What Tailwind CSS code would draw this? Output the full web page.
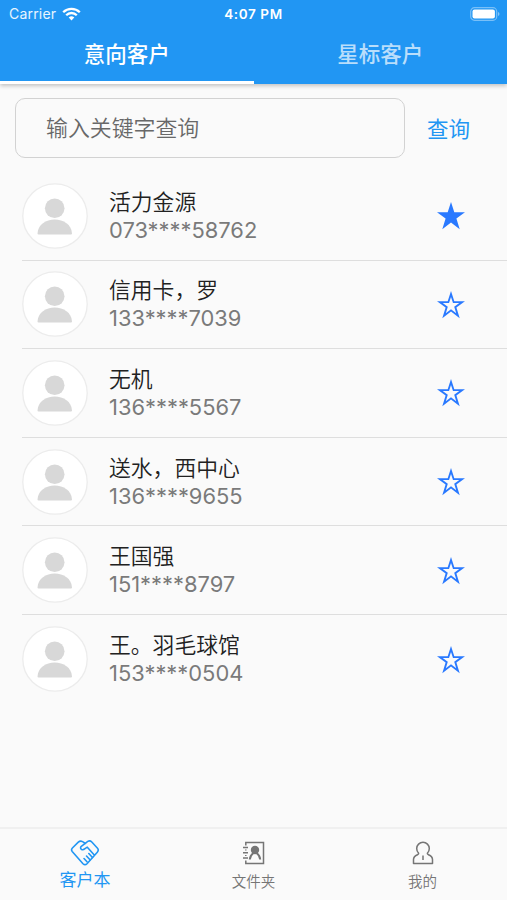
<!DOCTYPE html>
<html lang="zh-CN">
<head>
    <meta charset="UTF-8">
    <meta name="viewport" content="width=device-width, initial-scale=1.0">
    <title>客户本</title>
    <script src="https://cdn.jsdelivr.net/npm/@tailwindcss/browser@4"></script>
</head>
<body class="bg-[#fafafa] font-['Inter','Noto_Sans_CJK_SC',sans-serif] text-[#212121] flex flex-col h-[900px] overflow-hidden">

    <!-- Header -->
    <header class="bg-[#2196f3] text-white h-[84px] shrink-0 flex flex-col shadow-[0_2px_4px_rgba(0,0,0,0.22)]">
        <div class="h-[27px] grid grid-cols-3 items-center pl-[9px] pr-[7px]">
            <div class="flex items-center gap-1.5 text-[14px] text-white/90">
                <span class="w-[47px] whitespace-nowrap tracking-[0.2px]">Carrier</span>
                <svg class="w-[19px] h-[14px]" viewBox="0 0 19 14" fill="none" stroke="white" stroke-width="2.3">
                    <path d="M1.2 5.2a11.8 11.8 0 0 1 16.6 0"/>
                    <path d="M4.2 8.2a7.5 7.5 0 0 1 10.6 0"/>
                    <path d="M9.5 13.4 6.7 10.6a4 4 0 0 1 5.6 0z" fill="white" stroke="none"/>
                </svg>
            </div>
            <span class="text-[13.5px] font-semibold text-center whitespace-nowrap tracking-[0.6px] pt-px pr-0.5">4:07 PM</span>
            <svg class="w-[30px] h-[14px] justify-self-end" viewBox="0 0 30 14">
                <rect x="0.7" y="0.7" width="26" height="12.6" rx="3.8" fill="none" stroke="white" stroke-opacity="0.4" stroke-width="1.2"/>
                <rect x="2.5" y="2.5" width="22.4" height="9" rx="2" fill="white"/>
                <path d="M28 5v4q1.5-.5 1.5-2t-1.5-2" fill="white" fill-opacity="0.45"/>
            </svg>
        </div>
        <nav class="grow grid grid-cols-2 text-[21.5px] font-medium text-center leading-[54px]">
            <a class="border-b-[3px] border-white">意向客户</a>
            <a class="text-white/70">星标客户</a>
        </nav>
    </header>

    <!-- Search -->
    <div class="flex items-center pl-[15px] pt-[14px] shrink-0">
        <div class="w-[390px] h-[60px] border-[1.5px] border-[#d2d2d2] rounded-[10px] flex items-center pl-[30px] text-[21.9px] font-[350] text-[#686868]">输入关键字查询</div>
        <button class="ml-[22px] pt-0.5 text-[21.5px] text-[#2196f3]">查询</button>
    </div>

    <!-- Customers -->
    <ul id="list" class="grow mt-[14px] pl-[22px]"></ul>

    <!-- Bottom bar -->
    <footer class="h-[73px] shrink-0 border-t-2 border-[#f0f0f0] grid grid-cols-3 text-[#757575] text-[14.5px]">
        <div class="flex flex-col items-center pt-[10px] pl-px text-[#2196f3] text-[17px]">
            <svg class="w-[30px] h-[28px]" viewBox="0 0 30 28" fill="none" stroke="currentColor" stroke-width="1.6" stroke-linejoin="round" stroke-linecap="round">
                <path d="M15.500 4.500 12.500 2.600Q10.300 1.300 8.300 3.200L2.400 9Q.8 10.700 2.200 12.500L13 24.700Q15 26.700 17 24.700L27.300 13.200Q29.200 11 27.300 9L21.800 3Q20 1.200 17.800 2.400L11.300 7.300Q9.800 9 11.400 10.300Q13 11.400 15 9.700L17.300 8.200L24.500 16.300"/>
                <path d="M14 19.500l3 3.300M16.500 17l3.500 3.800M18.800 14.500l3.700 4"/>
            </svg>
            <span class="mt-px leading-6">客户本</span>
        </div>
        <div class="flex flex-col items-center pt-[11px]">
            <svg class="w-[24px] h-[26px]" viewBox="0 0 24 26" fill="none" stroke="currentColor" stroke-width="1.5">
                <path d="M3.800 5.500V2.500h17.700v21H3.800v-3M3.800 9.500v1M3.800 15v1"/>
                <path d="M1 7.500h5M1 12.800h5M1 18.100h5"/>
                <circle cx="13" cy="10" r="4.200" fill="currentColor" stroke="none"/>
                <path d="M7.800 19.500Q8 15.500 11.500 13M18.200 19.500Q18 15.500 14.500 13" stroke-width="2"/>
            </svg>
            <span class="mt-1 leading-6 font-[350]">文件夹</span>
        </div>
        <div class="flex flex-col items-center pt-[11px]">
            <svg class="w-[24px] h-[26px]" viewBox="0 0 24 26" fill="none" stroke="currentColor" stroke-width="1.5" stroke-linejoin="round">
                <path d="M7.500 13A6.300 6.300 0 1 1 16.500 13Q16 14 17.500 14.700Q21.500 16.500 21.500 19.500V23.500H2.500V19.500Q2.500 16.500 6.500 14.700Q8 14 7.500 13Z"/>
                <path d="M12 15.500v4.500"/>
            </svg>
            <span class="mt-1 leading-6 font-[350]">我的</span>
        </div>
    </footer>

    <script>
        const customers = [
            { name: '活力金源', phone: '073****58762', starred: true },
            { name: '信用卡，罗', phone: '133****7039' },
            { name: '无机', phone: '136****5567' },
            { name: '送水，西中心', phone: '136****9655' },
            { name: '王国强', phone: '151****8797' },
            { name: '王。羽毛球馆', phone: '153****0504' },
        ];

        const star = (filled) => `
            <svg class="w-[28px] h-[28px] text-[#2979ff]" viewBox="0 0 28 28" fill="currentColor" fill-rule="evenodd">
                <path d="M14 0 17.300 10.200H28L19.400 16.500 22.700 27.200 14 20.600 5.300 27.200 8.600 16.500 0 10.200H10.700Z${filled ? '' : 'M14 6 12 12H5.700L10.800 15.700 8.800 22.300 14 18.300 19.200 22.300 17.200 15.700 22.300 12H16Z'}"/>
            </svg>`;

        document.getElementById('list').innerHTML = customers.map((c, i) => `
            <li class="h-[88.6px] flex items-center ${i < customers.length - 1 ? 'border-b-[1.5px] border-[#dedede]' : ''}">
                <svg class="w-[66px] h-[66px] shrink-0" viewBox="0 0 66 66">
                    <circle cx="33" cy="33" r="32.200" fill="white" stroke="#ececec" stroke-width="1.300"/>
                    <circle cx="32.700" cy="25.300" r="9.800" fill="#d8d8d8"/>
                    <path d="M15.500 50.500C16 41.500 24 36.500 32.700 36.500S49.500 41.500 50 50.500Q50 51.500 49 51.500H16.500Q15.500 51.500 15.500 50.500Z" fill="#d8d8d8"/>
                </svg>
                <div class="ml-[21px] grow leading-7">
                    <p class="text-[21.8px] font-[350]">${c.name}</p>
                    <p class="text-[21.9px] text-[#7a7a7a]">${c.phone}</p>
                </div>
                <div class="mr-[42.5px] pt-px">${star(c.starred)}</div>
            </li>`).join('');
    </script>
</body>
</html>
